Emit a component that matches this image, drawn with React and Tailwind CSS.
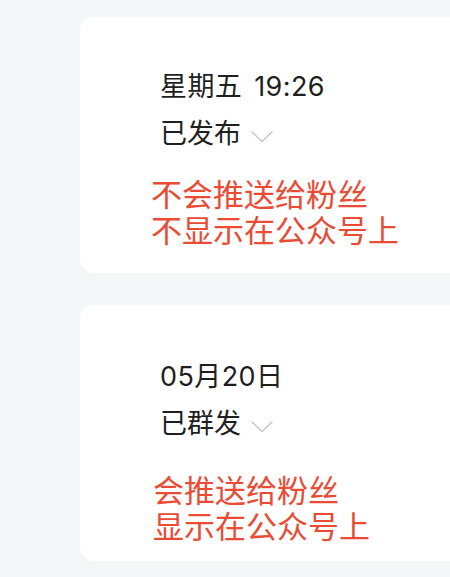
import React from "react";

const font = { fontFamily: '"Noto Sans CJK SC", "Noto Sans", sans-serif' };
const blackFont = { fontFamily: 'Inter, "Noto Sans CJK SC", sans-serif' };

function Chevron() {
  return (
    <svg width="22" height="12" viewBox="0 0 22 12" className="ml-[10px] mt-[10px]" fill="none">
      <polyline points="1,1 11,10.5 21,1" stroke="#c4c4c6" strokeWidth="1.4" strokeLinecap="round" strokeLinejoin="round" />
    </svg>
  );
}

function Card({ date, status, lines, pt, redMt, redMl }) {
  return (
    <div className={`bg-white rounded-l-[14px] h-[256px] pl-[80px] flex flex-col ${pt}`}>
      <div className="text-[27px] leading-[45px] tracking-[0.4px] text-[#1f1f1f]" style={blackFont}>{date}</div>
      <div className="flex items-center text-[27px] leading-[45px] text-[#1f1f1f]">
        <span>{status}</span>
        <Chevron />
      </div>
      <div className={`text-[31px] leading-[36px] text-[#e94b35] ${redMt} ${redMl}`}>
        {lines.map((l) => (
          <div key={l}>{l}</div>
        ))}
      </div>
    </div>
  );
}

export default function App() {
  return (
    <div className="min-h-[577px] bg-[#f5f6f8] pt-[17px] pl-[80px] flex flex-col gap-[32px]" style={font}>
      <Card
        date={<>星期五 <span className="ml-[4px]">19:26</span></>}
        status="已发布"
        lines={["不会推送给粉丝", "不显示在公众号上"]}
        pt="pt-[47px]"
        redMt="mt-[21px]"
        redMl="ml-[-9px]"
      />
      <Card
        date="05月20日"
        status="已群发"
        lines={["会推送给粉丝", "显示在公众号上"]}
        pt="pt-[49px]"
        redMt="mt-[27px]"
        redMl="ml-[-7px]"
      />
    </div>
  );
}
